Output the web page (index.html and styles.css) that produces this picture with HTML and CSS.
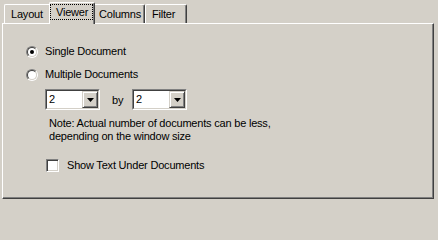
FILE: index.html
```html
<!DOCTYPE html>
<html>
<head>
<meta charset="utf-8">
<link rel="stylesheet" href="styles.css">
</head>
<body>
<div class="dialog">
  <div class="tabs">
    <div class="tab tab-layout">Layout</div>
    <div class="tab tab-viewer selected"><span class="focus">Viewer</span></div>
    <div class="tab tab-columns">Columns</div>
    <div class="tab tab-filter">Filter</div>
  </div>
  <div class="panel">
    <div class="row row-first">
      <span class="radio checked"></span>
      <span class="label">Single Document</span>
    </div>
    <div class="row row-second">
      <span class="radio"></span>
      <span class="label">Multiple Documents</span>
    </div>
    <div class="combo-row">
      <div class="combo">
        <div class="combo-inner">
          <span class="combo-value">2</span>
          <span class="combo-btn"><svg width="7" height="4" viewBox="0 0 7 4"><polygon points="0,0 7,0 3.5,4" fill="#000"/></svg></span>
        </div>
      </div>
      <span class="by">by</span>
      <div class="combo">
        <div class="combo-inner">
          <span class="combo-value">2</span>
          <span class="combo-btn"><svg width="7" height="4" viewBox="0 0 7 4"><polygon points="0,0 7,0 3.5,4" fill="#000"/></svg></span>
        </div>
      </div>
    </div>
    <div class="note">Note: Actual number of documents can be less,<br>depending on the window size</div>
    <div class="row row-check">
      <span class="checkbox"></span>
      <span class="label check-label">Show Text Under Documents</span>
    </div>
  </div>
</div>
</body>
</html>
```

FILE: styles.css
```css
html, body {
  margin: 0;
  padding: 0;
  background: #d4d0c8;
}
body {
  width: 438px;
  height: 203px;
  overflow: hidden;
  font-family: "Liberation Sans", Arial, sans-serif;
  font-size: 11px;
  letter-spacing: -0.2px;
  color: #000;
}
.dialog {
  padding: 2px 4px 4px 2px;
}
.tabs {
  display: flex;
  align-items: flex-end;
  height: 21px;
  padding-left: 2px;
}
.tab {
  box-sizing: border-box;
  height: 19px;
  border-top: 1px solid #fff;
  border-left: 1px solid #fff;
  border-right: 1px solid #404040;
  border-radius: 2px 2px 0 0;
  box-shadow: inset -1px 0 #808080;
  line-height: 15px;
  padding-top: 2px;
  white-space: nowrap;
}
.tab-layout {
  width: 45px;
  padding-left: 6px;
  border-right: none;
  box-shadow: none;
  border-top-right-radius: 0;
}
.tab-viewer {
  width: 46px;
  padding-left: 1px;
}
.tab-columns {
  width: 50px;
  padding-left: 4px;
  border-left: none;
  border-top-left-radius: 0;
}
.tab-filter {
  width: 42px;
  padding-left: 6px;
}
.tab.selected {
  height: 22px;
  margin-bottom: -1px;
  position: relative;
  z-index: 1;
  background: #d4d0c8;
  padding-top: 2px;
}
.focus {
  display: inline-block;
  outline: 1px dotted #000;
  outline-offset: 0;
  padding: 0 4px 0 5px;
  line-height: 14px;
  height: 14px;
}
.panel {
  box-sizing: border-box;
  height: 176px;
  border: 1px solid;
  border-color: #fff #404040 #404040 #fff;
  box-shadow: inset -1px -1px #808080;
  padding: 20px 0 0 23px;
}
.row {
  display: flex;
  align-items: center;
  height: 13px;
  line-height: 13px;
}
.row-first {
  margin-top: 1px;
}
.row-second {
  margin-top: 10px;
}
.radio {
  position: relative;
  box-sizing: border-box;
  width: 12px;
  height: 12px;
  border-radius: 50%;
  border: 1px solid;
  border-color: #808080 #fff #fff #808080;
  flex: none;
}
.radio::before {
  content: "";
  position: absolute;
  inset: 0;
  box-sizing: border-box;
  border-radius: 50%;
  border: 1px solid;
  border-color: #404040 #d4d0c8 #d4d0c8 #404040;
  background: #fff;
}
.radio.checked::after {
  content: "";
  position: absolute;
  left: 3px;
  top: 3px;
  width: 4px;
  height: 4px;
  border-radius: 50%;
  background: #000;
}
.label {
  margin-left: 7px;
}
.combo-row {
  display: flex;
  align-items: center;
  margin-top: 8px;
  margin-left: 19px;
}
.combo {
  box-sizing: border-box;
  width: 55px;
  height: 21px;
  border: 1px solid;
  border-color: #808080 #fff #fff #808080;
}
.combo-inner {
  box-sizing: border-box;
  height: 19px;
  border: 1px solid;
  border-color: #404040 #d4d0c8 #d4d0c8 #404040;
  background: #fff;
  display: flex;
  align-items: stretch;
}
.combo-value {
  flex: 1;
  padding-left: 2px;
  line-height: 16px;
}
.combo-btn {
  box-sizing: border-box;
  width: 16px;
  background: #d4d0c8;
  border: 1px solid;
  border-color: #d4d0c8 #404040 #404040 #d4d0c8;
  box-shadow: inset 1px 1px #fff, inset -1px -1px #808080;
  display: flex;
  align-items: center;
  justify-content: center;
}
.combo-btn svg {
  display: block;
}
.by {
  margin: 0 8px 0 12px;
  width: 12px;
}
.note {
  margin-top: 7px;
  margin-left: 23px;
  line-height: 13px;
}
.row-check {
  margin-top: 16px;
  margin-left: 20px;
}
.checkbox {
  box-sizing: border-box;
  width: 13px;
  height: 13px;
  border: 1px solid;
  border-color: #808080 #fff #fff #808080;
  box-shadow: inset 1px 1px #404040, inset -1px -1px #d4d0c8;
  background: #fff;
  flex: none;
}
.check-label {
  margin-left: 8px;
}
```
